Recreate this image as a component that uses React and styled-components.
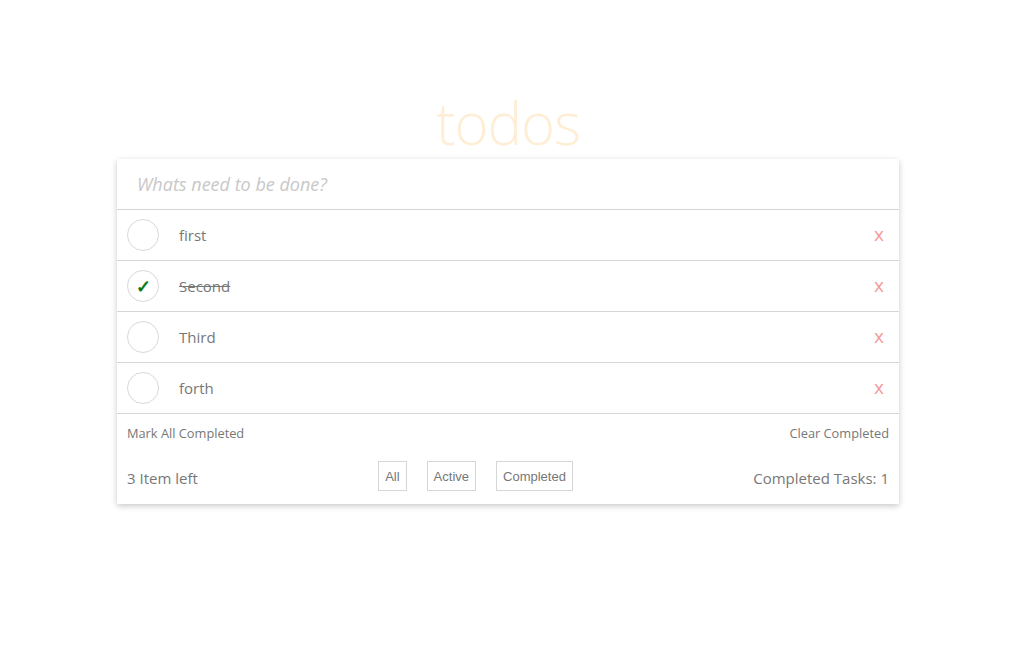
import React, { useState } from 'react'
import styled, { createGlobalStyle } from 'styled-components'

const GlobalStyle = createGlobalStyle`
  body {
    margin: 0;
    background: #fff;
    font-family: "Open Sans", "Noto Sans", sans-serif;
  }
`

const initialTodos = [
  { id: 1, text: 'first', done: false },
  { id: 2, text: 'Second', done: true },
  { id: 3, text: 'Third', done: false },
  { id: 4, text: 'forth', done: false },
]

export default function App() {
  const [todos, setTodos] = useState(initialTodos)
  const [value, setValue] = useState('')

  const toggle = (id) => setTodos(todos.map(t => t.id === id ? { ...t, done: !t.done } : t))
  const remove = (id) => setTodos(todos.filter(t => t.id !== id))
  const left = todos.filter(t => !t.done).length
  const completed = todos.length - left

  return (
    <Page>
      <GlobalStyle />
      <Title>todos</Title>
      <Card>
        <NewTodo
          placeholder='Whats need to be done?'
          value={value}
          onChange={(e) => setValue(e.target.value)}
        />
        <List>
          {todos.map(todo => (
            <Item key={todo.id}>
              <Toggle onClick={() => toggle(todo.id)}>{todo.done && '✓'}</Toggle>
              <Label $done={todo.done}>{todo.text}</Label>
              <Remove onClick={() => remove(todo.id)}>x</Remove>
            </Item>
          ))}
        </List>
        <Actions>
          <SmallLink>Mark All Completed</SmallLink>
          <SmallLink>Clear Completed</SmallLink>
        </Actions>
        <Footer>
          <Count>{left} Item left</Count>
          <Filters>
            <Filter>All</Filter>
            <Filter>Active</Filter>
            <Filter>Completed</Filter>
          </Filters>
          <Count>Completed Tasks: {completed}</Count>
        </Footer>
      </Card>
    </Page>
  )
}

const Page = styled.div`
  display: flex;
  flex-direction: column;
  align-items: center;
  min-height: 100vh;
  box-sizing: border-box;
  padding-top: 87px;
`

const Title = styled.h1`
  margin: 0;
  font-size: 58px;
  font-weight: 300;
  line-height: 72px;
  color: #ffeed6;
  letter-spacing: -1px;
`

const Card = styled.div`
  width: 782px;
  background: #fff;
  box-shadow: 0 2px 6px rgba(0, 0, 0, 0.22);
`

const NewTodo = styled.input`
  display: block;
  box-sizing: border-box;
  width: 100%;
  height: 51px;
  padding: 0 20px;
  border: none;
  border-bottom: 1px solid #d6d6d6;
  font-family: inherit;
  font-size: 18px;
  font-style: italic;
  color: #777;
  outline: none;
  &::placeholder {
    color: #c8c8c8;
  }
`

const List = styled.ul`
  margin: 0;
  padding: 0;
  list-style: none;
`

const Item = styled.li`
  display: flex;
  align-items: center;
  height: 50px;
  padding: 0 15px 0 10px;
  border-bottom: 1px solid #d6d6d6;
`

const Toggle = styled.span`
  box-sizing: border-box;
  width: 32px;
  height: 32px;
  border: 1px solid #d9d9d9;
  border-radius: 50%;
  display: flex;
  align-items: center;
  justify-content: center;
  font-size: 18px;
  font-weight: 600;
  color: #0a7a1a;
  cursor: pointer;
`

const Label = styled.span`
  flex: 1;
  margin-left: 20px;
  font-size: 15px;
  color: #777;
  text-decoration: ${p => p.$done ? 'line-through' : 'none'};
`

const Remove = styled.span`
  font-size: 19px;
  color: #f59a9a;
  cursor: pointer;
  margin-top: -2px;
`

const Actions = styled.div`
  display: flex;
  justify-content: space-between;
  padding: 10px 10px 0;
  line-height: 18px;
`

const SmallLink = styled.span`
  font-size: 12.8px;
  color: #777;
  cursor: pointer;
`

const Footer = styled.div`
  display: flex;
  justify-content: space-between;
  align-items: center;
  padding: 19px 10px 13px;
`

const Count = styled.span`
  font-size: 15px;
  color: #777;
  padding-top: 3px;
`

const Filters = styled.div`
  display: flex;
  gap: 20px;
`

const Filter = styled.button`
  height: 30px;
  padding: 0 6px;
  background: #fff;
  border: 1px solid #d6d6d6;
  font-family: "Liberation Sans", Arial, sans-serif;
  font-size: 13px;
  color: #777;
  cursor: pointer;
`
